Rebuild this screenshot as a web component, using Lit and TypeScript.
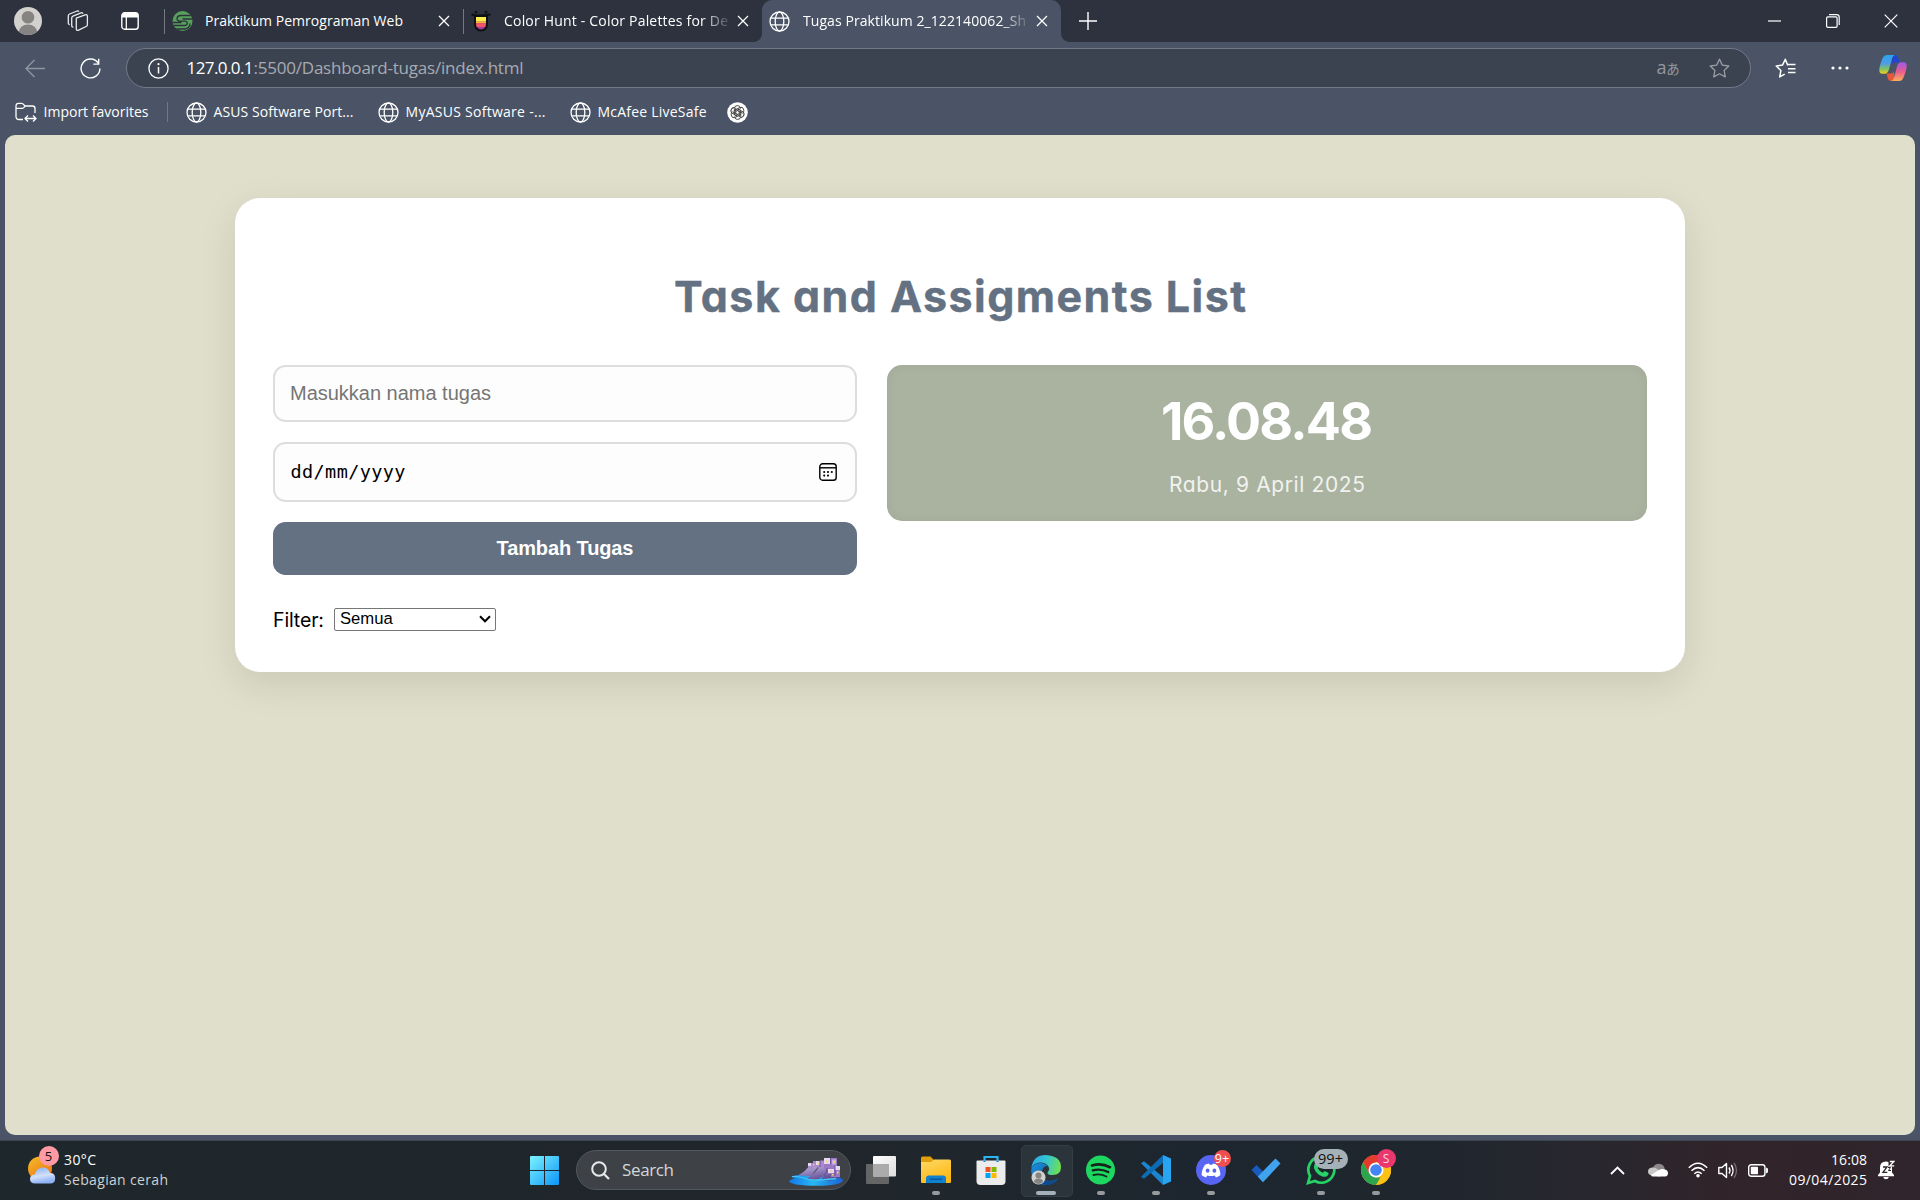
import { LitElement, html, svg, css, TemplateResult } from "lit";
import { customElement, property } from "lit/decorators.js";

/** One line of text whose letter spacing is adjusted to fill a given width. */
@customElement("fit-text")
class FitText extends LitElement {
  @property({ type: Number }) width = 100;
  @property() text = "";

  static styles = css`
    :host { display: inline-block; white-space: pre; flex: none; }
    .t { display: inline-block; }
  `;

  updated() {
    const el = this.renderRoot.querySelector(".t") as HTMLElement;
    el.style.letterSpacing = "0px";
    const natural = el.getBoundingClientRect().width;
    const gap = (this.width - natural) / Math.max(1, this.text.length - 1);
    el.style.letterSpacing = gap.toFixed(3) + "px";
    el.style.marginRight = (-gap).toFixed(3) + "px";
  }

  render() {
    return html`<span class="t">${this.text}</span>`;
  }
}

const icon = (w: number, h: number, body: TemplateResult, vb = `0 0 ${w} ${h}`) =>
  html`<svg width=${w} height=${h} viewBox=${vb} fill="none">${body}</svg>`;

const globe = () => icon(21, 21, svg`
  <g stroke="#fff" stroke-width="1.3">
    <circle cx="10.5" cy="10.5" r="9.5"/>
    <ellipse cx="10.5" cy="10.5" rx="4.3" ry="9.5"/>
    <path d="M1.9 7.2h17.2M1.9 13.8h17.2"/>
  </g>`);

const closeX = () => icon(12, 12, svg`<path d="M1 1l10 10M11 1L1 11" stroke="#fff" stroke-width="1.3"/>`);

const profile = icon(28, 28, svg`
  <clipPath id="pc"><circle cx="14" cy="14" r="14"/></clipPath>
  <g clip-path="url(#pc)"><rect width="28" height="28" fill="#d3d1ce"/>
  <circle cx="14" cy="10.3" r="6.3" fill="#868482"/>
  <ellipse cx="14" cy="25.5" rx="9.3" ry="8" fill="#868482"/></g>`);

const workspaces = icon(22, 22, svg`
  <g stroke="#e9eaec" stroke-width="1.3" stroke-linejoin="round">
    <path d="M9.3 8.2l8.8-3.4q2.2-.6 2.3 1.4v8.2q0 1.600-1.300 2.100l-7.500 3.700q-2.300.8-2.300-1.400z"/>
    <path d="M6.300 17q-1.600.2-1.600-1.500V8.200q0-1.500 1.300-2.100l8-3.300q1.300-.4 2 .8"/>
    <path d="M2.800 14.500q-1.500 0-1.500-1.500V6q0-1.400 1.300-2l7.600-3q1.200-.3 1.800.7"/>
  </g>`);

const tabActions = icon(18, 18, svg`
  <rect x=".8" y=".8" width="16.400" height="16.400" rx="2.800" stroke="#fff" stroke-width="1.400"/>
  <path d="M1 3.500Q1 1 3.500 1h11Q17 1 17 3.500V5.500H1z" fill="#fff"/>
  <path d="M5.300 5v12" stroke="#fff" stroke-width="1.300"/>`);

const greenLogo = icon(21, 20, svg`
  <clipPath id="gl"><circle cx="10.500" cy="10" r="10"/></clipPath>
  <g clip-path="url(#gl)"><rect width="21" height="20" fill="#57a05b"/>
  <path d="M21 4.500H9Q5 4.800 5 7.500T9 10.200h3.500q2.700 0 2.700 2.100t-2.700 2.200H0M21 8H10.500M0 11.500h9.500M0 18h12.500q5.500-.8 5.500-5.500" stroke="#2d323e" stroke-width="1.300"/></g>`);

const colorHunt = icon(20, 21, svg`
  <path d="M.5 3.500Q5 5 10 4.500T19.500 3.500" stroke="#101114" stroke-width="2"/><circle cx="5" cy="1.200" r="1.300" fill="#101114"/><circle cx="15" cy="1.200" r="1.300" fill="#101114"/>
  <path d="M3 4h14v8q0 8.500-7 8.500T3 12z" fill="#101114"/>
  <path d="M5 6h10v4.500H5z" fill="#fff04d"/><path d="M5 10.300h10v2.200H5z" fill="#ffb44e"/>
  <path d="M5 12.300h10q0 3-1 4H6q-1-1-1-4z" fill="#f4576a"/><path d="M6 16h8q-1.400 2.600-4 2.600T6 16z" fill="#a43a9c"/>`);

const back = icon(21, 19, svg`<path d="M20 9.500H1.500M9.500 1L1 9.500 9.500 18" stroke="#8d95a1" stroke-width="1.400"/>`);
const reload = icon(21, 21, svg`<path d="M18.300 5.200A9.400 9.400 0 1 0 19.900 10.500M18.700.8v5.300h-5.400" stroke="#fff" stroke-width="1.400"/>`);
const info = icon(21, 21, svg`<circle cx="10.500" cy="10.500" r="9.600" stroke="#fff" stroke-width="1.300"/><path d="M10.500 9v6.500" stroke="#fff" stroke-width="1.500"/><circle cx="10.500" cy="6.200" r="1.100" fill="#fff"/>`);
const star = icon(21, 20, svg`<path d="M10.500 1.200l2.800 5.900 6.500.9-4.700 4.500 1.200 6.400-5.800-3.100-5.800 3.100 1.200-6.400L1.200 8l6.500-.9z" stroke="#9a9da3" stroke-width="1.300" stroke-linejoin="round"/>`);
const favs = icon(22, 20, svg`<path d="M12.800 7.500L10.300 1.200 7.500 7.100 1.200 8l4.700 4.500-1.200 6.400 5-2.700M12.800 6.600H20.500M13 10.700h7.500M13 14.500h7.500" stroke="#fff" stroke-width="1.500" stroke-linejoin="round"/>`);
const dots = icon(18, 4, svg`<g fill="#fff"><circle cx="2" cy="2" r="1.600"/><circle cx="9" cy="2" r="1.600"/><circle cx="16" cy="2" r="1.600"/></g>`);
const copilot = icon(28, 26, svg`
  <defs>
    <linearGradient id="cl" x1="0" y1="0" x2="0" y2="1"><stop offset="0" stop-color="#29a6ea"/><stop offset=".45" stop-color="#4f9be8"/><stop offset=".75" stop-color="#7fc45f"/><stop offset="1" stop-color="#f2d01c"/></linearGradient>
    <linearGradient id="cr" x1="0" y1="0" x2="0" y2="1"><stop offset="0" stop-color="#a157e8"/><stop offset=".5" stop-color="#e85d8e"/><stop offset="1" stop-color="#fcae5d"/></linearGradient>
  </defs>
  <path d="M13 0h3q2.500 0 3.200 2.600L20.800 7.500h-4q-2.500 0-3.400 2.300z" fill="#2444cf"/>
  <path d="M15 26h-3q-2.500 0-3.200-2.600L7.500 18.500h4q2.500 0 3.500-2.300z" fill="#e5583b"/>
  <path d="M8 0h8.500q-2.500 0-3.500 3.500L9.800 15q-1.100 3.700-4 3.700H3.500Q0 18.700.3 14.500T3.500 3.500Q4.800 0 8 0z" fill="url(#cl)"/>
  <path d="M20 26h-8.500q2.500 0 3.500-3.500L18.200 11q1.100-3.700 4-3.700h2.300q3.500 0 3.200 4.200T24.500 22.500Q23.200 26 20 26z" fill="url(#cr)"/>`);
const importIcon = icon(22, 20, svg`
  <path d="M8 17.500H4Q1 17.500 1 14.500V4Q1 1.300 3.500 1.300h3Q8 1.300 9 3l1.300 1H17.500Q20 4 20 6.500V11M1 6.300h6.300Q8.800 6.300 10 4.200" stroke="#fff" stroke-width="1.300"/>
  <path d="M10.500 16.500h10M13 13.500l-3 3 3 3M18 13.500l3 3-3 3" stroke="#fff" stroke-width="1.300"/>`);
const openai = icon(21, 21, svg`
  <circle cx="10.500" cy="10.500" r="10.300" fill="#fff"/>
  <g stroke="#333" stroke-width=".9">
    ${[0, 60, 120, 180, 240, 300].map((a) => svg`<path transform="rotate(${a} 10.500 10.500)" d="M7.300 12.300V6.200Q7.600 3.600 10.300 3.600q1.800 0 2.800 1.300M8.800 9.500l5-2.900"/>`)}
  </g>`);
const winMin = icon(14, 2, svg`<path d="M0 1h13" stroke="#fff" stroke-width="1.200"/>`);
const winMax = icon(14, 14, svg`<rect x=".6" y="2.800" width="10.500" height="10.500" rx="1.300" stroke="#fff" stroke-width="1.200"/><path d="M3 .7h7.600q2.600 0 2.600 2.600V11" stroke="#fff" stroke-width="1.200"/>`);
const winClose = icon(14, 14, svg`<path d="M.7.7l12.600 12.600M13.300.7L.7 13.300" stroke="#fff" stroke-width="1.200"/>`);

const calendar = icon(18, 18, svg`
  <rect x=".8" y=".8" width="16.400" height="16.400" rx="2.800" stroke="#000" stroke-width="1.400"/>
  <path d="M1 4.800h16" stroke="#000" stroke-width="1.400"/>
  <g fill="#000"><circle cx="5.200" cy="9" r="1.050"/><circle cx="9" cy="9" r="1.050"/><circle cx="12.800" cy="9" r="1.050"/><circle cx="5.200" cy="12.600" r="1.050"/><circle cx="9" cy="12.600" r="1.050"/></g>`);
const caret = icon(12, 8, svg`<path d="M1 1.300l5 5 5-5" stroke="#000" stroke-width="2"/>`);

const weather = icon(28, 28, svg`
  <defs><linearGradient id="sun" x1="0" y1="0" x2=".7" y2="1"><stop offset="0" stop-color="#f5bd2c"/><stop offset="1" stop-color="#ee7410"/></linearGradient>
  <linearGradient id="cld" x1="0" y1="0" x2=".3" y2="1"><stop offset="0" stop-color="#82a9ee"/><stop offset=".6" stop-color="#d3e0fb"/><stop offset="1" stop-color="#8eb2f5"/></linearGradient></defs>
  <circle cx="12" cy="12.500" r="12" fill="url(#sun)"/>
  <path d="M7 27.500q-5-.2-5-4.500t4.800-4.500Q8.500 11.500 15 11.500q5.500 0 7 5.500 5.200 0 5.200 5.200T22 27.500z" fill="url(#cld)"/>`);

const start = icon(29, 29, svg`
  <defs><linearGradient id="wn" x1="0" y1="0" x2="29" y2="29" gradientUnits="userSpaceOnUse"><stop offset="0" stop-color="#7cf3ff"/><stop offset="1" stop-color="#0c95f8"/></linearGradient></defs>
  <path d="M0 1q0-1 1-1h13v14H0zM15 0h13q1 0 1 1v13H15zM0 15h14v14H1q-1 0-1-1zM15 15h14v13q0 1-1 1H15z" fill="url(#wn)"/>`);
const magnifier = icon(19, 19, svg`<circle cx="8" cy="8" r="6.800" stroke="#e8e9ea" stroke-width="2"/><path d="M13 13l5 5" stroke="#e8e9ea" stroke-width="2.200"/>`);
const town = icon(54, 29, svg`
  <defs><linearGradient id="sea" x1="0" y1="0" x2="1" y2="0"><stop offset="0" stop-color="#1377e8"/><stop offset=".45" stop-color="#27b7f2"/><stop offset="1" stop-color="#1a61d6"/></linearGradient>
  <linearGradient id="hill" x1="0" y1="0" x2=".5" y2="1"><stop offset="0" stop-color="#c3b2e2"/><stop offset="1" stop-color="#5a478f"/></linearGradient></defs>
  <path d="M0 24.500q2-3 7-3.300L2 19.500q6-2.500 14-1.500l32 2q6 1 6 4-3 4.700-27 4.700T0 24.500z" fill="url(#sea)"/>
  <path d="M9 18.500Q17 14 20 9l9 1-7 9zM18 21.500Q28 15 30 9l9 2-4 8-9 5zM31 23.500q5-4 7-10l12 4v3l-8 3z" fill="url(#hill)"/>
  <path d="M19 6h5V4h7v-.500h6v8h-6v-1.500h-7v1.500h-5z" fill="#a98ccb"/><path d="M35 1h13v8h3v11h-9v-3h-4v-5h-3z" fill="#9a7bc4"/>
  <path d="M35 1h7v6h-7zM27 4h4v4h-4zM19 6h3v3h-3zM39 12h6v4h-6zM46 9h5v4h-5z" fill="#e6d8f3"/>
  <path d="M43 2.500h4v5h-4z" fill="#c8b0e4"/><path d="M41.500 1v6M46 9v10M31 4v6M38 11v5" stroke="#5d4490" stroke-width=".9"/>
  <path d="M37 3.500h1.700v2H37zM44.500 4h1.500v2h-1.500zM41.500 13h1.700v2h-1.700zM48 14.500h1.500v2H48zM28.500 5.500h1.500v1.700h-1.500zM43 17h1.500v1.500H43zM24 7h1.300v1.500H24z" fill="#ffce6e"/>
  <path d="M3 19.700q8-.6 12 1.300t10 2 12-.5 10-1" stroke="#3ccbf7" stroke-width="1.300"/>`);
const taskView = icon(30, 28, svg`
  <defs><linearGradient id="tv" x1="0" y1="0" x2="1" y2="1"><stop offset="0" stop-color="#fff"/><stop offset="1" stop-color="#dcdcdc"/></linearGradient></defs>
  <rect y="8" width="23" height="20" rx="1" fill="#656565"/><rect x="7" width="23" height="20.500" rx="1" fill="url(#tv)"/><path d="M7 8h16v12.500H7z" fill="#ababab"/>`);
const folder = icon(30, 28, svg`
  <defs><linearGradient id="fd" x1="0" y1="0" x2=".5" y2="1"><stop offset="0" stop-color="#ffd968"/><stop offset="1" stop-color="#fdb813"/></linearGradient></defs>
  <path d="M0 2q0-1.500 1.500-1.500h8L13 4h15v6H0z" fill="#e09f0b"/><path d="M0 6h10l3-2.500h15.500Q30 3.500 30 5v21q0 1-1 1H1q-1 0-1-1z" fill="url(#fd)"/>
  <path d="M5 27v-4.500Q5 19.500 8 19.500h14q3 0 3 3V27z" fill="#1080d0"/><path d="M9 23.200h12" stroke="#0a4e8c" stroke-width="1.200"/>`);
const store = icon(30, 29, svg`
  <path d="M8.500 7V1h13v6" stroke="#2cb4ee" stroke-width="2.200"/>
  <path d="M.5 5.500Q.5 4.500 1.500 4.500h27q1 0 1 1V25q0 4-4 4h-21q-4 0-4-4z" fill="#ececec"/><path d="M8.500 4.500v1.500M21.500 4.500v1.500" stroke="#1785c9" stroke-width="2.200"/>
  <path d="M9.500 11h5v5h-5z" fill="#f25022"/><path d="M15.500 11h5v5h-5z" fill="#7fba00"/><path d="M9.500 17h5v5h-5z" fill="#00a4ef"/><path d="M15.500 17h5v5h-5z" fill="#ffb900"/>`);
const edge = icon(30, 30, svg`
  <defs><linearGradient id="e1" x1="0" y1=".3" x2="1" y2=".5"><stop offset="0" stop-color="#2aa9e8"/><stop offset=".5" stop-color="#35c6d0"/><stop offset="1" stop-color="#6fe04f"/></linearGradient>
  <linearGradient id="e2" x1="0" y1="0" x2="1" y2="1"><stop offset="0" stop-color="#1a90dc"/><stop offset="1" stop-color="#0d4f98"/></linearGradient></defs>
  <path d="M.3 13Q2 0 15 0q15 1 15 12 0 8-8.500 8-5 0-5-2 0-.8 1-2 1.500-2 0-4.500Q15 7.500 9 7.500 3 7.800.3 13z" fill="url(#e1)"/>
  <path d="M.2 14.500Q2 8 9 8q5 0 7.500 3-4.500 0-5.500 5-.8 6.500 5 9.500 5.500 2 11-2.500-4 7-12 7Q0 29.500.2 14.500z" fill="url(#e2)"/>
  <path d="M11 16q-1 9 8 10.500 5 .3 9-3.500-4 7-13 7-8-2-4-14z" fill="#104a8e"/>
  <circle cx="7.500" cy="22.500" r="7" fill="#d3d1ce"/><circle cx="7.500" cy="20.500" r="3" fill="#868482"/><path d="M3 27q0-3.500 4.500-3.500T12 27q-4.500 4-9 0z" fill="#868482"/>`);
const spotify = icon(29, 30, svg`<circle cx="14.500" cy="15" r="14.500" fill="#1ed760"/>
  <g stroke="#14241c" stroke-linecap="round"><path d="M6 10.500q9.500-2.700 18 1.700" stroke-width="2.700"/><path d="M6.800 15.400q8-2.200 15.500 1.700" stroke-width="2.300"/><path d="M7.400 20q7-1.700 13 1.500" stroke-width="1.900"/></g>`);
const vscode = icon(30, 30, svg`
  <path d="M0 8.200l3-2L22 22v8z" fill="#1b86cf"/>
  <path d="M0 21.800l3 2L22 8V0z" fill="#0c6cb4"/>
  <path d="M22 0l8 3.500v23L22 30z" fill="#28a4f0"/>`);
const discord = icon(30, 30, svg`<circle cx="15" cy="15" r="15" fill="#5865f2"/>
  <path d="M9 9.700q2-1 4-1.200l.7 1.300h2.600l.7-1.300q2 .2 4 1.200 3.500 5 3.300 10.500-2 1.500-4.300 2.200l-1.300-2q-3.700 1-7.400 0l-1.300 2q-2.300-.7-4.300-2.200Q5.500 14.700 9 9.700z" fill="#fff"/>
  <ellipse cx="11.600" cy="15.700" rx="1.900" ry="2.100" fill="#5865f2"/><ellipse cx="18.400" cy="15.700" rx="1.900" ry="2.100" fill="#5865f2"/>`);
const todo = icon(30, 25, svg`<path d="M.5 12L5.500 7l11 11-5 6z" fill="#185abd"/><path d="M24.500.5l5 5L12 24.300 6.800 18.500z" fill="#41a3ee"/>`);
const whatsapp = icon(30, 30, svg`<path d="M2 28l2-7A13 13 0 1 1 9 26z" stroke="#25d366" stroke-width="2.700"/>
  <path d="M9.300 8q1.500-1.200 2.500.3l1.300 2.700-1.400 2.200q1.500 3 5.200 4.500l1.800-1.700 3.500 1.700q.8.500 0 2.200-2 2.700-5.700 1.700Q10 19.300 8 13q-.3-3.500 1.300-5z" fill="#25d366"/>`);
const chrome = icon(30, 30, svg`
  <circle cx="15" cy="15" r="15" fill="#fbbc15"/>
  <path d="M2 7.500A15 15 0 0 1 28 7.500H15L8.500 18.800z" fill="#e33b2e"/>
  <path d="M2 7.500l6.500 11.300L15 22.500h6.500L15 30A15 15 0 0 1 2 7.500z" fill="#2da44e"/><path d="M21.500 18.800L15 30a15 15 0 0 0 13-22.500H15z" fill="#fbc116"/>
  <circle cx="15" cy="15" r="7.500" fill="#fff"/><circle cx="15" cy="15" r="5.800" fill="#4285f4"/>`);

const chevron = icon(15, 9, svg`<path d="M1 8l6.500-6.500L14 8" stroke="#fff" stroke-width="1.800"/>`);
const cloud = icon(20, 14, svg`<path d="M4 8Q5 1 10.500.7 16 .5 17 7z" fill="#8e888b"/><path d="M4 12.500Q0 12 0 8.500T4 4.500q3-.5 6 2l6 3-4 4z" fill="#c9c7c8"/><path d="M3 12l8-5q3-1.500 6-.5 3 .8 3 3.700T17 13.500H5q-1.500 0-2-1.500z" fill="#fff"/>`);
const wifi = icon(20, 16, svg`<g stroke="#fff" stroke-width="1.500"><path d="M.8 5.800q9.200-9.300 18.400 0M3.500 8.800q6.500-6.400 13 0M6.300 11.700q3.700-3.500 7.400 0"/></g><circle cx="10" cy="13.700" r="1.800" fill="#fff"/>`);
const volume = icon(20, 17, svg`<path d="M.8 5.500h3.200L8.500 1.500v14L4 11.500H.8z" stroke="#fff" stroke-width="1.400" stroke-linejoin="round"/><path d="M11 5.500q2 3 0 6M13.300 3q3.600 5.500 0 11" stroke="#fff" stroke-width="1.400"/><path d="M16 1q5 7.500 0 15" stroke="#716a6e" stroke-width="1.400"/>`);
const battery = icon(20, 13, svg`<rect x=".7" y=".7" width="16.200" height="11.600" rx="2.500" stroke="#fff" stroke-width="1.400"/><rect x="2.800" y="2.800" width="7.200" height="7.400" rx=".8" fill="#fff"/><path d="M18.300 4.200h.5q1 0 1 2.300t-1 2.300h-.5z" fill="#fff" stroke="#fff"/>`);
const bell = icon(17, 20, svg`<path d="M8 1.500Q2 1.700 2 7.500v5L0 15v1.200h16V15l-2-2.500v-5Q14 1.700 8 1.500z" fill="#fff"/><path d="M5.200 17h5.600q-.5 2.300-2.800 2.300T5.200 17z" fill="#fff"/>
  <path d="M5 7h4L5 12.300h4.300" stroke="#30242b" stroke-width="1.300"/><path d="M10.500 0H17v6.500h-6.500z" fill="#30242b"/><path d="M11.800 1.500h4l-4 4.300h4.400" stroke="#fff" stroke-width="1.300"/><path d="M10 7.500h2.500L10.500 10.500h2.500" stroke="#30242b" stroke-width="1"/>`);

@customElement("app-root")
class AppRoot extends LitElement {
  static styles = css`
    :host {
      display: flex; flex-direction: column; box-sizing: border-box;
      width: 1920px; height: 1200px; overflow: hidden; background: #4a5466;
      color: #fff; font-family: "Open Sans", "Noto Sans", sans-serif; font-size: 14px; line-height: 20px;
    }
    * { box-sizing: border-box; }
    svg { display: block; flex: none; }

    .tabs { display: flex; height: 42px; background: #2d323e; flex: none; }
    .lead { display: flex; align-items: center; width: 164px; padding-left: 14px; }
    .lead .ws { margin-left: 25px; }
    .lead .ta { margin-left: 32px; }
    .tab { display: flex; align-items: center; height: 42px; position: relative; }
    .tab.one { width: 299px; padding-left: 8px; }
    .tab.two { width: 299px; padding-left: 8px; }
    .tab.one::before, .tab.two::before { content: ""; position: absolute; left: 0; top: 9px; height: 25px; width: 1px; background: #747880; }
    .tab.on { width: 299px; background: #4a5466; border-radius: 10px 10px 0 0; padding-left: 7px; }
    .tab.on::before, .tab.on::after { content: ""; position: absolute; bottom: 0; width: 8px; height: 8px; }
    .tab.on::before { left: -8px; background: radial-gradient(circle at 0 0, transparent 7.500px, #4a5466 8px); }
    .tab.on::after { right: -8px; background: radial-gradient(circle at 100% 0, transparent 7.500px, #4a5466 8px); }
    .name { height: 20px; flex: none; overflow: hidden; margin-left: 13px; width: 224px; }
    .one .name { margin-left: 12px; }
    .fade { -webkit-mask-image: linear-gradient(90deg, #000 88%, rgba(0,0,0,.15)); mask-image: linear-gradient(90deg, #000 88%, rgba(0,0,0,.15)); }
    .tab .x { margin-left: 9px; }
    .plus { margin: 12px 0 0 18px; }
    .window { margin-left: auto; display: flex; align-items: center; gap: 44px; padding-right: 22px; }

    .nav { display: flex; align-items: center; height: 52px; flex: none; padding-left: 24.500px; }
    .nav .re { margin-left: 34px; }
    .address { display: flex; align-items: center; width: 1625px; height: 40px; margin: 0 0 0 25px; border: 1px solid #737a87; border-radius: 20px; background: #3b4351; padding: 0 20px 0 21px; }
    .url { display: flex; margin-left: 18px; font-size: 17px; }
    .url .path { color: #a7abb1; }
    .translate { margin-left: auto; margin-right: 29px; font: 18px/20px "Open Sans", "Noto Sans CJK JP", sans-serif; color: #94979d; letter-spacing: -.3px; }
    .translate small { font-size: 13.500px; }
    .nav .fav { margin-left: 24px; }
    .nav .more { margin-left: 34px; }
    .nav .pilot { margin-left: 30px; }

    .bookmarks { display: flex; align-items: center; height: 41px; padding: 0 0 5px 14.500px; flex: none; }
    .bookmarks .label { margin-left: 7px; display: flex; }
    .rule { width: 1px; height: 20px; background: #727a87; margin: 0 18px 0 18px; }
    .bm { display: flex; align-items: center; margin-right: 24px; }
    .bm.last { margin-right: 20px; }

    .page { width: 1910px; height: 1000px; margin: 0 5px; flex: none; border-radius: 10px; background: #e0dfcb; padding: 63px 230px 0; color: #000; overflow: hidden; }
    .card { height: 474px; border-radius: 25px; background: #fff; box-shadow: 0 12px 38px rgba(0, 0, 0, .1); padding: 68px 38px 0; }
    .brand { font-family: Inter, "Open Sans", sans-serif; font-feature-settings: "cv11"; font-optical-sizing: none; font-variation-settings: "opsz" 14; }
    .title { margin: 0; text-align: center; font-size: 43px; line-height: 60px; font-weight: 700; color: #637182; height: 99px; -webkit-text-stroke: .4px #637182; }
    .columns { display: grid; grid-template-columns: 584px 760px; gap: 30px; align-items: start; font-family: "Liberation Sans", Arial, sans-serif; }
    .form { display: flex; flex-direction: column; }
    .field { display: flex; align-items: center; border: 2px solid #ddd; border-radius: 12.500px; background: #fdfdfd; padding: 0 18px 2px 15px; height: 57px; font-size: 20px; color: #757575; }
    .field.date { height: 60px; margin-top: 20px; justify-content: space-between; color: #000; font-family: "DejaVu Sans Mono", monospace; font-size: 18.500px; padding: 0 18px 0 15.500px; }
    .add { height: 53px; margin-top: 20px; padding-bottom: 2px; border-radius: 12.500px; background: #637182; color: #fff; display: flex; align-items: center; justify-content: center; font-size: 20px; font-weight: 700; }
    .filter { display: flex; align-items: center; margin-top: 32px; height: 25px; font-size: 19.500px; }
    .select { display: flex; align-items: center; justify-content: space-between; width: 162px; height: 23px; margin: -1px 0 0 10px; padding: 0 4px 0 5px; border: 1px solid #767676; border-radius: 2px; background: #fff; font-size: 16.670px; }
    .clock { height: 156px; border-radius: 15px; background: #aab2a0; box-shadow: inset 0 0 12px rgba(0, 0, 0, .05); color: #fff; display: flex; flex-direction: column; align-items: center; padding-top: 27px; }
    .time { font-size: 52px; font-weight: 700; line-height: 60px; }
    .day { font-size: 21px; line-height: 30px; margin-top: 18px; color: #f1f2ef; }

    .taskbar { display: flex; align-items: center; height: 60px; padding-bottom: 1px; margin-top: auto; border-top: 1px solid #3d464f; flex: none;
      background: linear-gradient(90deg, #1e272b 0, #20262b 800px, #1d262f 1200px, #1f262e 1420px, #29272e 1600px, #31242a 1730px, #30252c 100%); }
    .left { display: flex; align-items: center; width: 517px; padding-left: 28px; }
    .wx { position: relative; }
    .pill { position: absolute; display: flex; align-items: center; justify-content: center; border-radius: 10px; height: 20px; line-height: 20px; }
    .pill.five { left: 10.500px; top: -10px; width: 20px; background: #ff99a4; color: #111; font-size: 13px; }
    .pill.nine { left: 18px; top: -5px; width: 17px; height: 17px; background: #ee4e50; font-size: 12.500px; }
    .pill.many { left: 8px; top: -6px; width: 34px; background: #a4b1b9; color: #111; font-size: 14.500px; }
    .pill.s { left: 16px; top: -6px; background: #e8386e; width: 19px; height: 19px; font-size: 12px; color: #ffd5df; }
    .wxt { display: flex; flex-direction: column; margin-left: 8px; }
    .wxt .b { color: #cfd1d2; }
    .slot { width: 55px; height: 58px; display: flex; align-items: center; justify-content: center; position: relative; flex: none; }
    .slot .in { position: relative; z-index: 1; }
    .slot.hot::before { content: ""; position: absolute; left: 2.500px; top: 4px; width: 50px; height: 50px; border-radius: 5px; background: #2b343a; border: 1px solid #353e44; }
    .slot.run::after { content: ""; position: absolute; bottom: 4px; left: 23.500px; width: 8px; height: 4px; border-radius: 2px; background: #979b9e; }
    .slot.hot::after { left: 17.500px; width: 20px; background: #a4b1bd; }
    .search { display: flex; align-items: center; width: 275px; height: 40px; margin: 0 2px 0 4px; border: 1px solid #53585c; border-radius: 20px; background: #3e4246; padding: 0 7px 0 14px; color: #d4d6d7; font-size: 17px; }
    .search .q { margin-left: 12px; }
    .search .art { margin: 2px 0 0 auto; }
    .tray { margin-left: auto; display: flex; align-items: center; padding-right: 25px; }
    .tray .cl { margin-left: 23px; } .tray .wf { margin-left: 20px; } .tray .vo { margin-left: 10px; } .tray .ba { margin-left: 10px; }
    .when { display: flex; flex-direction: column; align-items: flex-end; margin: 0 11px 0 21px; }
  `;

  render() {
    const slot = (body: unknown, cls = "run", badge: unknown = "") =>
      html`<div class="slot ${cls}"><div class="in">${body}${badge}</div></div>`;
    const bookmark = (text: string, width: number, last = false) =>
      html`<div class="bm ${last ? "last" : ""}">${globe()}<span class="label"><fit-text .text=${text} .width=${width}></fit-text></span></div>`;
    return html`
      <div class="tabs">
        <div class="lead">${profile}<span class="ws">${workspaces}</span><span class="ta">${tabActions}</span></div>
        <div class="tab one">${greenLogo}<div class="name"><fit-text .text=${"Praktikum Pemrograman Web"} .width=${198}></fit-text></div><span class="x">${closeX()}</span></div>
        <div class="tab two">${colorHunt}<div class="name fade"><fit-text .text=${"Color Hunt - Color Palettes for De"} .width=${224}></fit-text></div><span class="x">${closeX()}</span></div>
        <div class="tab on">${globe()}<div class="name fade"><fit-text .text=${"Tugas Praktikum 2_122140062_Sh"} .width=${223}></fit-text></div><span class="x">${closeX()}</span></div>
        <span class="plus">${icon(18, 18, svg`<path d="M9 0v18M0 9h18" stroke="#fff" stroke-width="1.400"/>`)}</span>
        <div class="window">${winMin}${winMax}${winClose}</div>
      </div>
      <div class="nav">
        ${back}<span class="re">${reload}</span>
        <div class="address">
          ${info}
          <div class="url"><fit-text .text=${"127.0.0.1"} .width=${67}></fit-text><fit-text class="path" .text=${":5500/Dashboard-tugas/index.html"} .width=${270}></fit-text></div>
          <span class="translate">a<small>あ</small></span>${star}
        </div>
        <span class="fav">${favs}</span><span class="more">${dots}</span><span class="pilot">${copilot}</span>
      </div>
      <div class="bookmarks">
        ${importIcon}<span class="label"><fit-text .text=${"Import favorites"} .width=${105}></fit-text></span>
        <div class="rule"></div>
        ${bookmark("ASUS Software Port...", 140)}${bookmark("MyASUS Software -...", 140)}${bookmark("McAfee LiveSafe", 109, true)}
        ${openai}
      </div>
      <div class="page">
        <div class="card">
          <h1 class="title brand"><fit-text .text=${"Task and Assigments List"} .width=${572}></fit-text></h1>
          <div class="columns">
            <div class="form">
              <div class="field"><fit-text .text=${"Masukkan nama tugas"} .width=${201}></fit-text></div>
              <div class="field date"><fit-text .text=${"dd/mm/yyyy"} .width=${115}></fit-text>${calendar}</div>
              <div class="add"><fit-text .text=${"Tambah Tugas"} .width=${137}></fit-text></div>
              <div class="filter"><fit-text class="brand" .text=${"Filter:"} .width=${51}></fit-text><div class="select"><span>Semua</span>${caret}</div></div>
            </div>
            <div class="clock brand">
              <div class="time"><fit-text .text=${"16.08.48"} .width=${212}></fit-text></div>
              <div class="day"><fit-text .text=${"Rabu, 9 April 2025"} .width=${196}></fit-text></div>
            </div>
          </div>
        </div>
      </div>
      <div class="taskbar">
        <div class="left">
          <div class="wx">${weather}<span class="pill five">5</span></div>
          <div class="wxt"><fit-text .text=${"30°C"} .width=${32}></fit-text><fit-text class="b" .text=${"Sebagian cerah"} .width=${104}></fit-text></div>
        </div>
        ${slot(start, "")}
        <div class="search">${magnifier}<fit-text class="q" .text=${"Search"} .width=${52}></fit-text><span class="art">${town}</span></div>
        ${slot(taskView, "")}${slot(folder)}${slot(store, "")}${slot(edge, "run hot")}${slot(spotify)}${slot(vscode)}
        ${slot(discord, "run", html`<span class="pill nine">9+</span>`)}
        ${slot(todo, "")}
        ${slot(whatsapp, "run", html`<span class="pill many">99+</span>`)}
        ${slot(chrome, "run", html`<span class="pill s">S</span>`)}
        <div class="tray">
          ${chevron}<span class="cl">${cloud}</span><span class="wf">${wifi}</span><span class="vo">${volume}</span><span class="ba">${battery}</span>
          <div class="when"><fit-text .text=${"16:08"} .width=${36}></fit-text><fit-text .text=${"09/04/2025"} .width=${78}></fit-text></div>
          ${bell}
        </div>
      </div>
    `;
  }
}
